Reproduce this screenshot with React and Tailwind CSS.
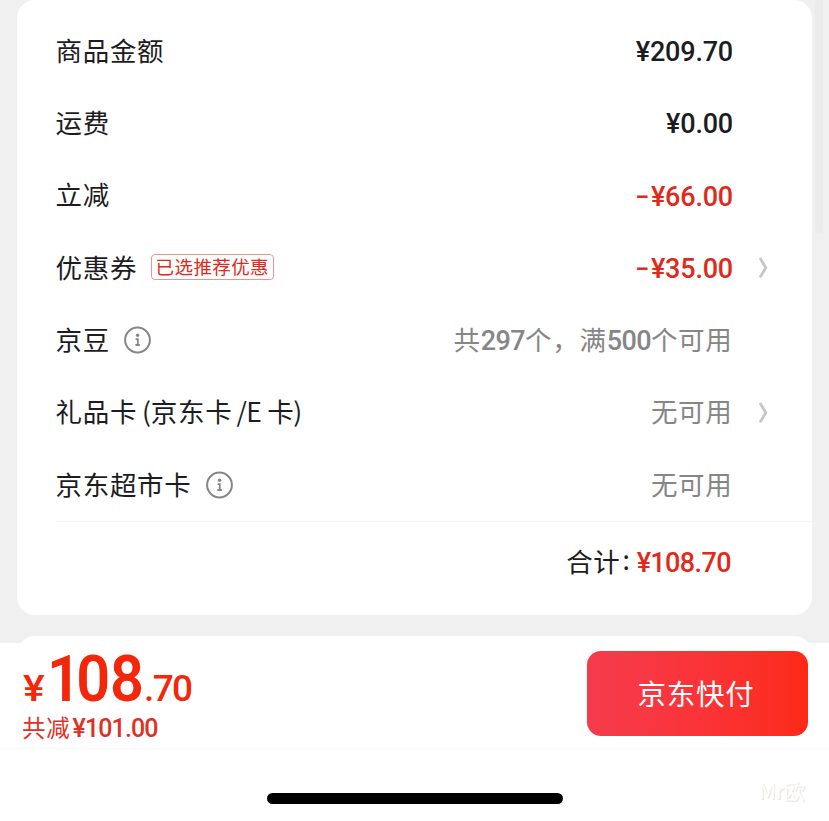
import React from "react";

const rows = [
  { label: "商品金额", value: "¥209.70", type: "price" },
  { label: "运费", value: "¥0.00", type: "price" },
  { label: "立减", value: "-¥66.00", type: "discount" },
  {
    label: "优惠券",
    tag: "已选推荐优惠",
    value: "-¥35.00",
    type: "discount",
    arrow: true,
  },
  { label: "京豆", info: true, type: "beans" },
  { label: "礼品卡", giftCard: true, value: "无可用", type: "muted", arrow: true },
  { label: "京东超市卡", info: true, value: "无可用", type: "muted" },
];

function Num({ children, className = "" }) {
  return (
    <span className={`font-['Roboto',sans-serif] font-medium ${className}`}>
      {children}
    </span>
  );
}

function InfoIcon() {
  return (
    <svg
      className="ml-[14.5px] h-7 w-7 shrink-0"
      viewBox="0 0 28 28"
      fill="none"
      stroke="#868686"
    >
      <circle cx="13.5" cy="14" r="12.4" strokeWidth="2" />
      <circle cx="13.6" cy="9.2" r="1.7" fill="#868686" stroke="none" />
      <path d="M11.6 13.2h2.2v6M11.4 19h4.4" strokeWidth="1.8" />
    </svg>
  );
}

function Arrow() {
  return (
    <svg
      className="h-6 w-3"
      viewBox="0 0 12 24"
      fill="none"
      stroke="#c6c6c6"
      strokeWidth="2.8"
    >
      <path d="M2 2l5.8 9.7L2 21.4" />
    </svg>
  );
}

function RowValue({ row }) {
  if (row.type === "beans") {
    return (
      <span className="pt-px text-[#868686]">
        共<Num className="text-[27px] tracking-[-0.6px]">297</Num>个，满
        <Num className="text-[27px] tracking-[-0.6px]">500</Num>个可用
      </span>
    );
  }
  if (row.type === "muted") {
    return <span className="pb-[2px] text-[#868686]">{row.value}</span>;
  }
  const negative = row.value.startsWith("-");
  return (
    <span
      className={`-mr-[0.5px] flex items-center pt-[3px] ${
        negative ? "text-[#e0291a]" : "text-[#1d1d1f]"
      }`}
    >
      {negative && (
        <Num className="mr-[2px] -mt-[2px] origin-right scale-x-[1.5] text-[27px] tracking-normal">
          -
        </Num>
      )}
      <Num className="text-[27px] tracking-[-0.2px]">
        {row.value.replace("-", "")}
      </Num>
    </span>
  );
}

function App() {
  return (
    <div className="relative flex h-[821px] w-[829px] flex-col overflow-hidden bg-[#f0f0f0] font-['Noto_Sans_CJK_SC',sans-serif] text-[26.5px] leading-none tracking-[0.7px] whitespace-nowrap text-[#1d1d1f]">
      <div className="absolute top-0 right-[6px] h-[233px] w-2 rounded-b bg-[#ebebeb]"></div>

      <div className="mr-[17px] ml-[17px] h-[615px] shrink-0 rounded-[18px] bg-white pt-[15px] pl-[38.5px]">
        {rows.map((row) => (
          <div key={row.label} className="flex h-[72.3px] items-center">
            <span className="pb-[2px]">{row.label}</span>
            {row.giftCard && (
              <span className="ml-[5px] pb-[2px]">
                <span className="-mr-px">(</span>京东卡
                <span className="ml-1 tracking-[-0.6px]">/E</span>
                <span className="ml-[6px] tracking-[-0.5px]">卡)</span>
              </span>
            )}
            {row.tag && (
              <span className="ml-[13.5px] flex h-[26px] -translate-y-px items-center rounded-[4px] border border-[#e9958e] px-[4px] pb-[2px] text-[18.5px] tracking-[0.4px] text-[#e0291a]">
                {row.tag}
              </span>
            )}
            {row.info && <InfoIcon />}
            <div className="ml-auto flex items-center">
              <RowValue row={row} />
              <div className="flex w-[79.5px] pl-[25px]">
                {row.arrow && <Arrow />}
              </div>
            </div>
          </div>
        ))}
        <div className="flex h-[81px] items-center justify-end border-t border-[#f5f5f5] pr-[81px]">
          <span className="pb-[2px]">合计</span>
          <span className="mr-[6px] ml-[2px] pb-[5px]">:</span>
          <Num className="pt-[2px] text-[27px] tracking-[-0.6px] text-[#e0291a]">
            ¥108.70
          </Num>
        </div>
      </div>

      {/* top edge of the next card, cut off by the pay bar */}
      <div className="mx-[17px] mt-[21px] h-[7px] shrink-0 overflow-hidden">
        <div className="h-10 rounded-[18px] bg-white"></div>
      </div>

      <div className="flex h-[106px] shrink-0 justify-between border-b border-[#f8f8f8] bg-white pr-[21px] pl-[22px]">
        <div className="pt-[10px]">
          <div className="flex h-[54px] items-baseline text-[#f2270c]">
            <Num className="ml-px w-[24px] origin-left scale-x-110 text-[37px] leading-[54px] tracking-normal">
              ¥
            </Num>
            <Num className="flex w-[97px] origin-left scale-x-[0.93] text-[64px] leading-[54px] font-semibold tracking-normal">
              <span className="tracking-[-5px]">1</span>
              <span className="tracking-[-0.5px]">08</span>
            </Num>
            <Num className="text-[37px] leading-[54px] tracking-[-1.6px]">
              .70
            </Num>
          </div>
          <div className="mt-[9px] text-[23.5px] tracking-[0.8px] text-[#dc3226]">
            共减
            <Num className="ml-[2px] text-[25px] tracking-[-0.9px]">
              ¥101.00
            </Num>
          </div>
        </div>
        <button className="mt-2 h-[85px] w-[221px] rounded-[14px] bg-linear-to-r from-[#f63b4d] to-[#fd2a16] pr-[3px] pb-px text-[28.5px] tracking-[0.8px] text-white">
          京东快付
        </button>
      </div>

      <div className="relative flex grow justify-center bg-white pt-[44px]">
        <div className="h-[11px] w-[296px] rounded-full bg-black"></div>
        <span className="absolute right-[24px] bottom-[20px] text-[21px] tracking-normal text-white [text-shadow:1px_1px_1px_#dedede]">
          Mr欧
        </span>
      </div>
    </div>
  );
}

export default App;
